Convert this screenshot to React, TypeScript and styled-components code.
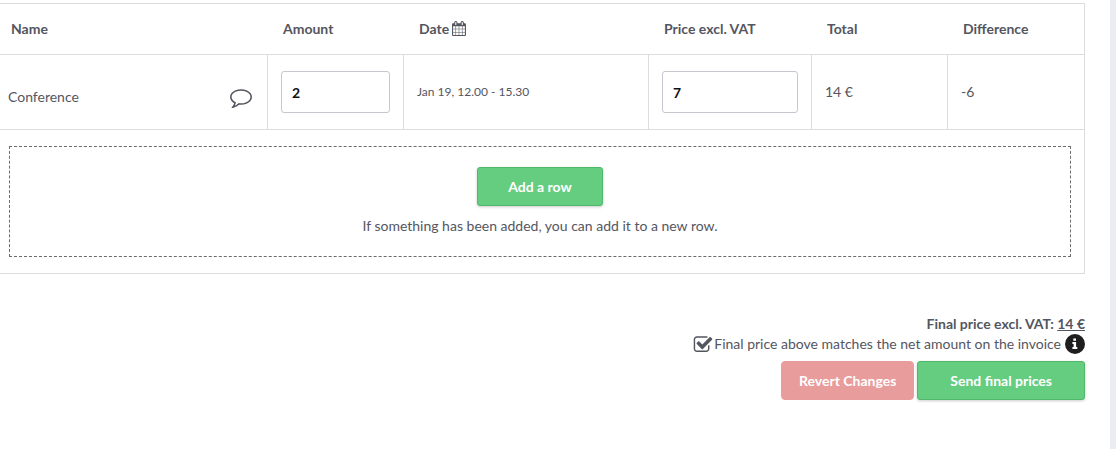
import React, { useState } from "react";
import styled, { createGlobalStyle } from "styled-components";

const ink = "#54565f";
const line = "#dcdcde";

const GlobalStyle = createGlobalStyle`
  *, *::before, *::after { box-sizing: border-box; }
  body {
    margin: 0;
    background: #ebecf1;
    color: ${ink};
    font: 400 14px/20px "Lato", "Liberation Sans", sans-serif;
  }
  button, input { font: inherit; }
`;

const Page = styled.main`
  min-height: 100vh;
  margin-right: 6px;
  padding: 3px 25px 40px 0;
  background: #fff;
`;

const PriceTable = styled.table`
  width: 100%;
  table-layout: fixed;
  border-collapse: separate;
  border-spacing: 0;
  border: solid ${line};
  border-width: 1px 1px 0 0;
`;

const Col = styled.col<{ $width?: number }>`
  width: ${(p) => (p.$width ? `${p.$width}px` : "auto")};
`;

const HeadCell = styled.th<{ $first?: boolean }>`
  height: 51px;
  padding: 0 0 0 ${(p) => (p.$first ? 11 : 15)}px;
  border-bottom: 1px solid ${line};
  font-size: 14px;
  font-weight: 700;
  text-align: left;
  white-space: nowrap;

  svg {
    margin-left: 3px;
    vertical-align: -2px;
  }
`;

const Cell = styled.td<{ $small?: boolean }>`
  padding: 16px 13px;
  border-bottom: 1px solid ${line};
  border-right: 1px solid ${line};
  font-size: ${(p) => (p.$small ? 12 : 14)}px;
  white-space: nowrap;

  &:last-child { border-right: 0; }
`;

const NameCell = styled(Cell)`
  padding: 10px 15px 0 8px;
`;

const NameLine = styled.div`
  display: flex;
  align-items: center;
  justify-content: space-between;
`;

const IconButton = styled.button`
  display: flex;
  padding: 0;
  border: 0;
  background: none;
  color: inherit;
  cursor: pointer;
`;

const Field = styled.input`
  display: block;
  width: 100%;
  height: 42px;
  padding: 0 10px;
  border: 1px solid #c5c8ce;
  border-radius: 3px;
  background: #fff;
  color: #111;
  font-size: 14px;
  font-weight: 700;
`;

const FooterCell = styled.td`
  padding: 16px 13px 16px 9px;
  border-bottom: 1px solid ${line};
`;

const AddBox = styled.div`
  display: flex;
  flex-direction: column;
  align-items: center;
  gap: 10px;
  padding: 20px;
  border: 1px dashed #6b6b6b;
`;

const Hint = styled.p`
  margin: 0;
  font-size: 14px;
`;

const Button = styled.button<{ $tone: "green" | "red"; $pad: number }>`
  height: 39px;
  padding: 0 ${(p) => p.$pad}px;
  border: 1px solid ${(p) => (p.$tone === "green" ? "#4fb96b" : "#e89c9c")};
  border-radius: ${(p) => (p.$tone === "green" ? 3 : 4)}px;
  background: ${(p) => (p.$tone === "green" ? "#65cd7f" : "#e89c9c")};
  box-shadow: ${(p) => (p.$tone === "green" ? "0 1px 3px rgba(0, 0, 0, 0.2)" : "none")};
  color: #fff;
  font-size: 14px;
  font-weight: 700;
  white-space: nowrap;
  cursor: pointer;
`;

const Summary = styled.section`
  display: flex;
  flex-direction: column;
  align-items: flex-end;
  padding-top: 40px;
`;

const FinalPrice = styled.strong`
  font-size: 14px;
`;

const ConfirmLine = styled.div`
  display: flex;
  align-items: center;
  gap: 4px;
`;

const ConfirmLabel = styled.label`
  display: flex;
  align-items: center;
  font-size: 14px;
  cursor: pointer;
`;

const Tick = styled.span`
  position: relative;
  display: flex;

  input {
    position: absolute;
    inset: 0;
    width: 100%;
    height: 100%;
    margin: 0;
    opacity: 0;
    cursor: pointer;
  }
`;

const InfoButton = styled(IconButton)`
  color: #1e1e1e;
`;

const Actions = styled.div`
  display: flex;
  gap: 3px;
  padding-top: 7px;
`;

const CalendarIcon = () => (
  <svg width="14" height="15" viewBox="0 0 1664 1792" fill="currentColor" aria-hidden="true">
    <path d="M128 1664h288v-288h-288v288zm352 0h320v-288h-320v288zm-352-352h288v-320h-288v320zm352 0h320v-320h-320v320zm-352-384h288v-288h-288v288zm736 736h320v-288h-320v288zm-384-736h320v-288h-320v288zm768 736h288v-288h-288v288zm-384-352h320v-320h-320v320zm-352-864v-288q0-13-9.5-22.5t-22.5-9.5h-64q-13 0-22.5 9.5t-9.5 22.5v288q0 13 9.5 22.5t22.5 9.5h64q13 0 22.5-9.5t9.5-22.5zm736 864h288v-320h-288v320zm-384-384h320v-288h-320v288zm384 0h288v-288h-288v288zm32-480v-288q0-13-9.5-22.5t-22.5-9.5h-64q-13 0-22.5 9.5t-9.5 22.5v288q0 13 9.5 22.5t22.5 9.5h64q13 0 22.5-9.5t9.5-22.5zm384-64v1280q0 52-38 90t-90 38h-1408q-52 0-90-38t-38-90v-1280q0-52 38-90t90-38h128v-96q0-66 47-113t113-47h64q66 0 113 47t47 113v96h384v-96q0-66 47-113t113-47h64q66 0 113 47t47 113v96h128q52 0 90 38t38 90z" />
  </svg>
);

const CommentIcon = () => (
  <svg width="22" height="22" viewBox="0 0 1792 1792" fill="currentColor" aria-hidden="true">
    <path d="M896 384q-204 0-381.5 69.5t-282 187.5-104.5 255q0 112 71.5 213.5t201.5 175.5l87 50-27 96q-24 91-70 172 152-63 275-171l43-38 57 6q69 8 130 8 204 0 381.5-69.5t282-187.5 104.5-255-104.5-255-282-187.5-381.5-69.5zm896 512q0 174-120 321.5t-326 233-450 85.5q-70 0-145-8-198 175-460 242-49 14-114 22h-5q-15 0-27-10.5t-16-27.5v-1q-3-4-.5-12t2-10 4.5-9.5l6-9 7-8.5 8-9q7-8 31-34.5t34.5-38 31-39.5 32.5-51 27-59 26-76q-157-89-247.5-220t-90.5-281q0-174 120-321.5t326-233 450-85.5 450 85.5 326 233 120 321.5z" />
  </svg>
);

const CheckIcon = ({ checked }: { checked: boolean }) => (
  <svg width="21" height="20" viewBox="0 -80 1882 1792" fill="currentColor" aria-hidden="true">
    <path d="M1472 930v318q0 119-84.5 203.5t-203.5 84.5h-832q-119 0-203.5-84.5t-84.5-203.5v-832q0-119 84.5-203.5t203.5-84.5h832q63 0 117 25 15 7 18 23 3 17-9 29l-49 49q-10 10-23 10-3 0-9-2-23-6-45-6h-832q-66 0-113 47t-47 113v832q0 66 47 113t113 47h832q66 0 113-47t47-113v-254q0-13 9-22l64-64q10-10 23-10 6 0 12 3 20 8 20 29z" />
    {checked && (
      <path d="M1703 441l-814 814q-24 24-57 24t-57-24l-430-430q-24-24-24-57t24-57l110-110q24-24 57-24t57 24l263 263 647-647q24-24 57-24t57 24l110 110q24 24 24 57t-24 57z" />
    )}
  </svg>
);

const InfoIcon = () => (
  <svg width="20" height="20" viewBox="0 0 20 20" aria-hidden="true">
    <circle cx="10" cy="10" r="10" fill="currentColor" />
    <path
      fill="#fff"
      d="M8.3 4.6h2.7v2.2H8.3zM7.4 8h3.7v5.1h1.2v1.9H7.4v-1.9h1.2V9.9H7.4z"
    />
  </svg>
);

export default function App() {
  const [amount, setAmount] = useState("2");
  const [price, setPrice] = useState("7");
  const [confirmed, setConfirmed] = useState(true);

  return (
    <>
      <GlobalStyle />
      <Page>
        <PriceTable>
          <colgroup>
            <Col />
            <Col $width={136} />
            <Col $width={245} />
            <Col $width={163} />
            <Col $width={136} />
            <Col $width={136} />
          </colgroup>
          <thead>
            <tr>
              <HeadCell $first>Name</HeadCell>
              <HeadCell>Amount</HeadCell>
              <HeadCell>
                Date
                <CalendarIcon />
              </HeadCell>
              <HeadCell>Price excl. VAT</HeadCell>
              <HeadCell>Total</HeadCell>
              <HeadCell>Difference</HeadCell>
            </tr>
          </thead>
          <tbody>
            <tr>
              <NameCell>
                <NameLine>
                  Conference
                  <IconButton type="button" aria-label="Comment">
                    <CommentIcon />
                  </IconButton>
                </NameLine>
              </NameCell>
              <Cell>
                <Field aria-label="Amount" value={amount} onChange={(e) => setAmount(e.target.value)} />
              </Cell>
              <Cell $small>Jan 19, 12.00 - 15.30</Cell>
              <Cell>
                <Field aria-label="Price excl. VAT" value={price} onChange={(e) => setPrice(e.target.value)} />
              </Cell>
              <Cell>14 €</Cell>
              <Cell>-6</Cell>
            </tr>
          </tbody>
          <tfoot>
            <tr>
              <FooterCell colSpan={6}>
                <AddBox>
                  <Button type="button" $tone="green" $pad={30}>Add a row</Button>
                  <Hint>If something has been added, you can add it to a new row.</Hint>
                </AddBox>
              </FooterCell>
            </tr>
          </tfoot>
        </PriceTable>

        <Summary>
          <FinalPrice>
            Final price excl. VAT: <u>14 €</u>
          </FinalPrice>
          <ConfirmLine>
            <ConfirmLabel>
              <Tick>
                <input
                  type="checkbox"
                  checked={confirmed}
                  onChange={(e) => setConfirmed(e.target.checked)}
                />
                <CheckIcon checked={confirmed} />
              </Tick>
              Final price above matches the net amount on the invoice
            </ConfirmLabel>
            <InfoButton type="button" aria-label="More information">
              <InfoIcon />
            </InfoButton>
          </ConfirmLine>
          <Actions>
            <Button type="button" $tone="red" $pad={17}>Revert Changes</Button>
            <Button type="button" $tone="green" $pad={32}>Send final prices</Button>
          </Actions>
        </Summary>
      </Page>
    </>
  );
}
